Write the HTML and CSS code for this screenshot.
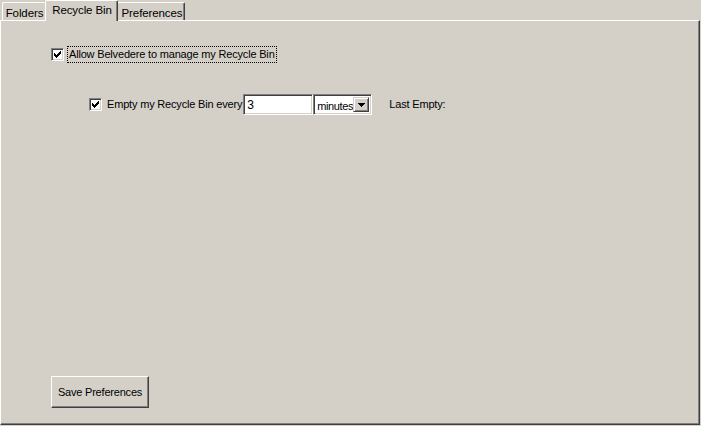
FILE: index.html
```html
<!DOCTYPE html>
<html>
<head>
<meta charset="utf-8">
<link rel="stylesheet" href="styles.css">
</head>
<body>
<div class="window">
  <div class="tabs">
    <div class="tab tab-first">Folders</div>
    <div class="tab tab-active">Recycle Bin</div>
    <div class="tab tab-last">Preferences</div>
  </div>
  <div class="panel">
    <div class="row row-main">
      <span class="check"><svg width="7" height="7" viewBox="0 0 7 7" shape-rendering="crispEdges"><path d="M6 0h1v1h-1z M5 1h2v1h-2z M0 2h1v1h-1z M4 2h3v1h-3z M0 3h2v1h-2z M3 3h3v1h-3z M0 4h5v1h-5z M1 5h3v1h-3z M2 6h1v1h-1z" fill="#000"/></svg></span>
      <span class="label focus">Allow Belvedere to manage my Recycle Bin</span>
    </div>
    <div class="row row-sub">
      <span class="check"><svg width="7" height="7" viewBox="0 0 7 7" shape-rendering="crispEdges"><path d="M6 0h1v1h-1z M5 1h2v1h-2z M0 2h1v1h-1z M4 2h3v1h-3z M0 3h2v1h-2z M3 3h3v1h-3z M0 4h5v1h-5z M1 5h3v1h-3z M2 6h1v1h-1z" fill="#000"/></svg></span>
      <span class="label">Empty my Recycle Bin every</span>
      <span class="input">3</span>
      <span class="select"><span class="select-text">minutes</span><span class="select-btn"><svg width="7" height="4" viewBox="0 0 7 4" shape-rendering="crispEdges"><path d="M0 0h7v1h-7z M1 1h5v1h-5z M2 2h3v1h-3z M3 3h1v1h-1z" fill="#000"/></svg></span></span>
      <span class="label last">Last Empty:</span>
    </div>
    <div class="spacer"></div>
    <div class="footer">
      <button class="button">Save Preferences</button>
    </div>
  </div>
</div>
</body>
</html>
```
FILE: styles.css
```css
html, body {
  margin: 0;
  padding: 0;
  background: #d4d0c8;
}
body {
  font-family: "Liberation Sans", Arial, sans-serif;
  font-size: 11px;
  letter-spacing: -0.18px;
  color: #000;
  width: 701px;
  height: 426px;
  overflow: hidden;
}
.window {
  display: flex;
  flex-direction: column;
  width: 700px;
  height: 425px;
}
.tabs {
  display: flex;
  align-items: flex-end;
  height: 20px;
  padding-left: 2px;
}
.tab {
  box-sizing: border-box;
  height: 18px;
  padding: 4px 0 0 0;
  text-align: center;
  border-top: 1px solid #fff;
  border-left: 1px solid #fff;
  border-right: 1px solid #404040;
  box-shadow: inset -1px 0 0 #808080;
  border-radius: 2px 2px 0 0;
  line-height: 13px;
  font-size: 11.5px;
  letter-spacing: -0.1px;
}
.tab-first { width: 43px; border-right: none; box-shadow: none; padding-left: 1px; }
.tab-active {
  position: relative;
  z-index: 2;
  width: 73px;
  height: 21px;
  margin-bottom: -1px;
  margin-left: 0;
  margin-right: -2px;
  padding-top: 3px;
  padding-left: 1px;
  background: #d4d0c8;
}
.tab-last { width: 69px; padding-left: 3px; }
.panel {
  flex: 1;
  box-sizing: border-box;
  border-top: 1px solid #fff;
  border-left: 1px solid #fff;
  border-right: 1px solid #404040;
  border-bottom: 1px solid #404040;
  box-shadow: inset -1px -1px 0 #808080;
  display: flex;
  flex-direction: column;
  padding: 0 0 16px 50px;
}
.row {
  display: flex;
  align-items: center;
}
.row-main {
  margin-top: 25px;
  height: 17px;
}
.row-sub {
  margin-top: 31px;
  margin-left: 38px;
  height: 21px;
}
.check {
  box-sizing: border-box;
  width: 13px;
  height: 13px;
  background: #fff;
  border-top: 1px solid #808080;
  border-left: 1px solid #808080;
  border-right: 1px solid #fff;
  border-bottom: 1px solid #fff;
  box-shadow: inset 1px 1px 0 #404040, inset -1px -1px 0 #d4d0c8;
  display: flex;
  align-items: center;
  justify-content: center;
  flex: none;
}
.check svg { display: block; }
.label {
  margin-left: 5px;
  line-height: 13px;
  white-space: nowrap;
}
.focus {
  outline: 1px dotted #000;
  outline-offset: 0;
  padding: 1px 1px;
  margin-left: 4px;
}
.input {
  box-sizing: border-box;
  width: 70px;
  height: 21px;
  margin-left: 1px;
  background: #fff;
  border-top: 1px solid #808080;
  border-left: 1px solid #808080;
  border-right: 1px solid #fff;
  border-bottom: 1px solid #fff;
  box-shadow: inset 1px 1px 0 #404040, inset -1px -1px 0 #d4d0c8;
  padding: 4px 0 0 3px;
  font-size: 12px;
  line-height: 13px;
}
.select {
  box-sizing: border-box;
  width: 59px;
  height: 21px;
  background: #fff;
  border-top: 1px solid #808080;
  border-left: 1px solid #808080;
  border-right: 1px solid #fff;
  border-bottom: 1px solid #fff;
  box-shadow: inset 1px 1px 0 #404040, inset -1px -1px 0 #d4d0c8;
  display: flex;
  align-items: center;
  padding: 2px;
}
.select-text {
  flex: 1;
  padding-left: 1px;
  font-size: 11px;
  letter-spacing: -0.4px;
  padding-top: 2px;
  white-space: nowrap;
  overflow: hidden;
}
.select-btn {
  box-sizing: border-box;
  width: 16px;
  height: 15px;
  flex: none;
  background: #d4d0c8;
  border-top: 1px solid #d4d0c8;
  border-left: 1px solid #d4d0c8;
  border-right: 1px solid #404040;
  border-bottom: 1px solid #404040;
  box-shadow: inset 1px 1px 0 #fff, inset -1px -1px 0 #808080;
  display: flex;
  align-items: center;
  justify-content: center;
}
.select-btn svg { display: block; }
.last { margin-left: 17px; }
.spacer { flex: 1; }
.footer { display: flex; }
.button {
  box-sizing: border-box;
  width: 98px;
  height: 32px;
  font-family: "Liberation Sans", Arial, sans-serif;
  font-size: 11px;
  letter-spacing: -0.2px;
  color: #000;
  background: #d4d0c8;
  border-top: 1px solid #fff;
  border-left: 1px solid #fff;
  border-right: 1px solid #404040;
  border-bottom: 1px solid #404040;
  box-shadow: inset -1px -1px 0 #808080;
  padding: 0;
  margin: 0;
}
```
